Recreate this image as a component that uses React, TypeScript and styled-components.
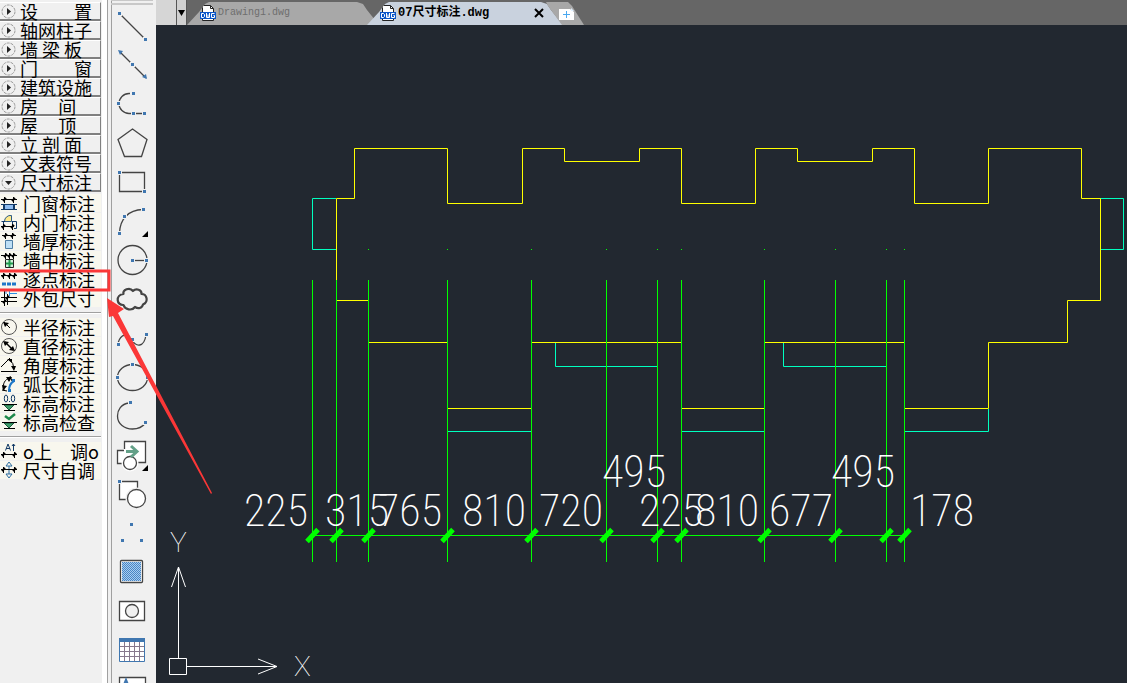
import React from "react";
import styled, { createGlobalStyle } from "styled-components";

const GlobalStyle = createGlobalStyle`
  *, *::before, *::after { box-sizing: border-box; }
  html, body { margin: 0; padding: 0; }
  body {
    background: #f0f0f0;
    font-family: "Noto Sans CJK SC", sans-serif;
    overflow: hidden;
  }
  button { font-family: inherit; border: 0; padding: 0; margin: 0; background: none; color: inherit; }
`;

const Page = styled.div`
  position: relative;
  display: flex;
  height: 100vh;
  overflow: hidden;
  background: #f0f0f0;
`;

/* ---------- screen menu ---------- */

const Menu = styled.nav`
  flex: none;
  width: 108px;
  padding-top: 2px;
  padding-right: 6px;
  border-right: 1px solid #a0a0a0;
  background: linear-gradient(to left, #fff 0, #fff 5px, #f0f0f0 5px);
`;

const GroupButton = styled.button`
  display: flex;
  align-items: center;
  gap: 4px;
  width: 100%;
  height: 19px;
  padding-left: 1px;
  border-top: 1px solid #fff;
  border-right: 1px solid #808080;
  border-bottom: 2px solid #808080;
  background: #f0f0f0;
  color: #000;
  font-size: 18px;
  line-height: 18px;
  white-space: pre;
`;

const CommandList = styled.div`
  padding: 2px 0 4px;
`;

const CommandButton = styled.button`
  display: flex;
  align-items: center;
  gap: 5px;
  width: 100%;
  height: 19px;
  border-bottom: 1px solid #f0f0f0;
  background: #f8f7ee;
  color: #000;
  font-size: 18px;
  line-height: 18px;
  white-space: pre;
`;

const Divider = styled.hr`
  width: 100%;
  height: 2px;
  margin: 0 0 2px;
  border: 0;
  border-top: 1px solid #a0a0a0;
  background: #fff;
`;

const SmallIcon = styled.svg`
  flex: none;
  display: block;
  width: 18px;
  height: 18px;
  fill: none;
  stroke: #000;
`;

const BulletIcon = styled.svg`
  flex: none;
  display: block;
  width: 15px;
  height: 15px;
`;

const Bullet = ({ open }: { open?: boolean }) => (
  <BulletIcon viewBox="0 0 15 15" aria-hidden="true">
    <circle cx="7.5" cy="7.5" r="6.5" fill="none" stroke="#9a9a9a" strokeDasharray="3 1" />
    <path d={open ? "M4 6h7l-3.500 4z" : "M6 4v7l4-3.500z"} fill="#222" />
  </BulletIcon>
);

/* Horizontal dimension line with a tick at each x. */
const DimMark = ({ y, at, from = 1, to = 17 }: { y: number; at: number[]; from?: number; to?: number }) => (
  <>
    <path d={`M${from} ${y + 0.5}H${to}`} />
    {at.map((x) => (
      <React.Fragment key={x}>
        <path d={`M${x + 0.5} ${y - 2}v6`} />
        <path d={`M${x - 1} ${y + 2}l3-3`} strokeWidth="2" />
      </React.Fragment>
    ))}
  </>
);

const groups = [
  "设　　置",
  "轴网柱子",
  "墙 梁 板",
  "门　　窗",
  "建筑设施",
  "房     间",
  "屋     顶",
  "立 剖 面",
  "文表符号",
  "尺寸标注",
];

type Command = { label: string; icon: React.ReactNode };

const commandGroups: Command[][] = [
  [
    {
      label: "门窗标注",
      icon: (
        <>
          <path d="M4 11h10v4H4z" fill="#8fbdf0" stroke="none" />
          <path d="M1 10.500h16M1 15.500h16" stroke="#123a66" />
          <path d="M4 10v6M14 10v6" stroke="#123a66" strokeWidth="2" />
          <DimMark y={5} at={[4, 13]} />
        </>
      ),
    },
    {
      label: "内门标注",
      icon: (
        <>
          <path d="M4.500 8.500a6 6 0 0 1 7-6v6z" fill="#ffe98a" stroke="#2d5d88" />
          <path d="M12 8.500h4.500v7H14M1.500 8.500H5M12.500 8v3M3.500 9v7" stroke="#123a66" />
          <DimMark y={13} at={[3, 12]} to={14} />
        </>
      ),
    },
    {
      label: "墙厚标注",
      icon: (
        <>
          <path d="M5.500 8.500h7v8h-7z" fill="#bfe0f5" stroke="#4f7fa5" />
          <DimMark y={3} at={[5, 12]} from={2} to={16} />
        </>
      ),
    },
    {
      label: "墙中标注",
      icon: (
        <>
          <path d="M5.500 8.500h8v8h-8z" fill="#d3f2dc" stroke="#222" />
          <path d="M9.500 9v7M6 12.500h7" stroke="#1f9a4c" strokeWidth="2" />
          <DimMark y={4} at={[5, 9, 13]} />
        </>
      ),
    },
    {
      label: "逐点标注",
      icon: (
        <>
          <DimMark y={5} at={[3, 9, 14]} />
          <path d="M2 14h4M7 14h4M12 14h4" stroke="#1f78c8" strokeWidth="3" />
        </>
      ),
    },
    {
      label: "外包尺寸",
      icon: (
        <>
          <path d="M6 1.500h10M9 4.500h8M9.500 2v5M6 1v4" stroke="#2b8fe0" />
          <path d="M4.500 2v15M7.500 5v11" />
          <DimMark y={8} at={[7]} />
          <DimMark y={12} at={[4]} />
        </>
      ),
    },
  ],
  [
    {
      label: "半径标注",
      icon: (
        <>
          <circle cx="9" cy="9" r="7.500" stroke="#555" />
          <path d="M4 4l6 6" />
          <path d="M3 4l6 1-4 4z" fill="#000" stroke="none" />
        </>
      ),
    },
    {
      label: "直径标注",
      icon: (
        <>
          <circle cx="9" cy="9" r="7.500" stroke="#555" />
          <path d="M5 5l8 8" strokeWidth="1.500" />
          <path d="M3 4l6 1-4 4zM15 14l-6-1 4-4z" fill="#000" stroke="none" />
        </>
      ),
    },
    {
      label: "角度标注",
      icon: (
        <>
          <path d="M1 15.500h16M1 11L10 2M9 3q5 4 5 10" />
          <path d="M7 3l5 0 0 4zM11 10l5 0-2 5z" fill="#000" stroke="none" />
        </>
      ),
    },
    {
      label: "弧长标注",
      icon: (
        <>
          <path d="M4 15C2 9 5 4 10 3M2 15l5 1M10 1l2 5" />
          <path d="M2 10l5 1-4 5zM6 2l6 0-3 5z" fill="#000" stroke="none" />
          <path d="M9 16c0-4 1-8 5-10" stroke="#1f78c8" strokeWidth="2" />
          <path d="M8 14h3v3h-3zM12 4h3v3h-3z" fill="#1f78c8" stroke="none" />
        </>
      ),
    },
    {
      label: "标高标注",
      icon: (
        <>
          <ellipse cx="6" cy="4.500" rx="1.700" ry="3.500" stroke="#123a66" />
          <ellipse cx="13" cy="4.500" rx="1.700" ry="3.500" stroke="#123a66" />
          <path d="M9.500 7v1" stroke="#123a66" />
          <path d="M4 11h10l-5 5z" fill="#3f9d6b" stroke="#1a5a3c" />
          <path d="M2 10.500h15M4 16.500h11" />
        </>
      ),
    },
    {
      label: "标高检查",
      icon: (
        <>
          <path d="M5 3l4 3 6-5" stroke="#1f8a4c" strokeWidth="2.500" />
          <path d="M4 10h10l-5 5z" fill="#3f9d6b" stroke="#1a5a3c" />
          <path d="M2 9.500h15M4 15.500h11" />
        </>
      ),
    },
  ],
  [
    {
      label: "o上　调o",
      icon: (
        <>
          <path d="M5.500 8.500L8 2l2.500 6.500M6 6.500h4M13.500 9V2M12 4l1.500-2L15 4" stroke="#123a66" />
          <DimMark y={12} at={[3, 14]} />
        </>
      ),
    },
    {
      label: "尺寸自调",
      icon: (
        <>
          <path d="M9 1l3 4H6zM9 17l3-4H6zM9 5v8" stroke="#2d6da0" />
          <DimMark y={8} at={[3, 14]} />
        </>
      ),
    },
  ],
];

/* ---------- draw toolbar ---------- */

const Toolbar = styled.div`
  flex: none;
  display: flex;
  flex-direction: column;
  width: 48px;
  padding-left: 3px;
  overflow: hidden;
  background: linear-gradient(to right, #f0f0f0 3px, #a0a0a0 3px, #a0a0a0 4px, #f0f0f0 4px);
`;

const Grip = styled.div`
  flex: none;
  width: 42px;
  height: 5px;
  margin-bottom: 3px;
  border-top: 1px solid #c8c8c8;
  border-bottom: 2px solid #c8c8c8;
`;

const ToolButton = styled.button`
  flex: none;
  width: 45px;
  height: 39px;
`;

const ToolIcon = styled.svg`
  display: block;
  width: 45px;
  height: 39px;
  fill: none;
  stroke: #444;
  stroke-width: 1.3;
`;

const Grips = ({ at }: { at: [number, number][] }) => (
  <>
    {at.map(([x, y]) => (
      <g key={`${x}-${y}`} stroke="none">
        <rect x={x - 2} y={y - 2} width="5" height="5" fill="#f0f0f0" />
        <rect x={x - 1} y={y - 1} width="3" height="3" fill="#4077b0" />
      </g>
    ))}
  </>
);

const Flyout = () => <path d="M36 28v6h-6z" fill="#000" stroke="none" />;

const tools: { name: string; icon: React.ReactNode }[] = [
  {
    name: "Line",
    icon: (
      <>
        <path d="M8 6l26 26" />
        <Grips at={[[7, 5], [33, 31]]} />
      </>
    ),
  },
  {
    name: "Construction line",
    icon: (
      <>
        <path d="M8 5l26 26" />
        <path d="M6 3l5 1-3 4zM35 32l-5-2 4-3z" fill="#4077b0" stroke="none" />
        <Grips at={[[20, 17]]} />
      </>
    ),
  },
  {
    name: "Polyline",
    icon: (
      <>
        <path d="M18 7.500h-1a10 10 0 0 0 0 20h16" />
        <Grips at={[[21, 7], [6, 17], [21, 27], [32, 27]]} />
      </>
    ),
  },
  { name: "Polygon", icon: <path d="M20.500 4L35 14.500 29.500 31.500h-17L6 14.500z" /> },
  {
    name: "Rectangle",
    icon: (
      <>
        <path d="M7.500 8.500h25v19h-25z" />
        <Grips at={[[7, 8], [32, 27]]} />
      </>
    ),
  },
  {
    name: "Arc",
    icon: (
      <>
        <path d="M7.500 30C8 16 16 7 31 6.500" />
        <Grips at={[[31, 6], [12, 13], [7, 30]]} />
        <Flyout />
      </>
    ),
  },
  {
    name: "Circle",
    icon: (
      <>
        <circle cx="20.500" cy="18" r="14.500" />
        <path d="M20 18.500h14" />
        <Grips at={[[20, 18], [34, 18]]} />
      </>
    ),
  },
  {
    name: "Revision cloud",
    icon: (
      <path
        d="M11.500 13C10.500 9 17.500 5.500 21 10C24 7 30 8.500 29.500 13C35 13 37 21 31 23.500C30 27.500 26 28 23 26C20 30 13 29 11.500 24C4.500 24.500 3 14 11.500 13z"
        strokeWidth="2.200"
        strokeLinejoin="round"
      />
    ),
  },
  {
    name: "Spline",
    icon: (
      <>
        <path d="M6 23c3-10 10-10 14-3s12 8 14-5" />
        <Grips at={[[6, 24], [20, 19], [34, 14]]} />
      </>
    ),
  },
  {
    name: "Ellipse",
    icon: (
      <>
        <ellipse cx="20.500" cy="18.500" rx="15" ry="13" />
        <Grips at={[[20, 5], [5, 18], [35, 18]]} />
      </>
    ),
  },
  {
    name: "Ellipse arc",
    icon: (
      <>
        <path d="M17 5C9 6 5.500 12 5.500 18c0 8 7 13 15 13 6 0 10-2 13-6" />
        <Grips at={[[18, 4], [33, 24]]} />
      </>
    ),
  },
  {
    name: "Insert block",
    icon: (
      <>
        <path d="M5.500 13.500h15v13h-15z" fill="#fff" stroke="none" />
        <path d="M12.500 4.500h21v21h-21z" fill="#fff" />
        <path d="M11 12h3v15h-3z" fill="#fff" stroke="none" />
        <path d="M12 13.500H5.500v13h8" />
        <circle cx="18" cy="26" r="8.500" fill="#fff" stroke="none" />
        <circle cx="18" cy="26" r="6.500" fill="#fff" />
        <path d="M14 14.500h11M19 9l6 5.500-6 5.500" stroke="#63a088" strokeWidth="3" />
        <Flyout />
      </>
    ),
  },
  {
    name: "Make block",
    icon: (
      <>
        <path d="M7.500 5.500h18v18h-18z" fill="#fff" />
        <circle cx="24.500" cy="22.500" r="11" fill="#f0f0f0" stroke="none" />
        <circle cx="24.500" cy="22.500" r="9" fill="#fff" />
        <Grips at={[[7, 5]]} />
      </>
    ),
  },
  { name: "Point", icon: <Grips at={[[19, 9], [10, 25], [29, 25]]} /> },
  {
    name: "Hatch",
    icon: (
      <>
        <defs>
          <pattern id="dither" width="2" height="2" patternUnits="userSpaceOnUse">
            <rect width="2" height="2" fill="#a8cdf0" stroke="none" />
            <path d="M0 0h1v1h-1zM1 1h1v1h-1z" fill="#4a86c4" stroke="none" />
          </pattern>
        </defs>
        <rect x="8.500" y="6.500" width="22" height="22" rx="1" fill="#fff" />
        <rect x="10" y="8" width="19" height="19" fill="url(#dither)" stroke="none" />
      </>
    ),
  },
  {
    name: "Region",
    icon: (
      <>
        <path d="M7.500 8.500h25v19h-25z" fill="#fff" />
        <circle cx="20" cy="18" r="6.500" fill="#f0f0f0" />
      </>
    ),
  },
  {
    name: "Table",
    icon: (
      <>
        <path d="M7.500 6.500h25v23h-25z" fill="#fff" stroke="#4077b0" strokeWidth="1" />
        <path d="M8 14.500h24M8 19.500h24M8 24.500h24M12.500 10v19M17.500 10v19M22.500 10v19M27.500 10v19" stroke="#86788c" strokeWidth="1" />
        <path d="M7 8h26" stroke="#4077b0" strokeWidth="4" />
      </>
    ),
  },
  {
    name: "Multiline text",
    icon: (
      <>
        <path d="M7.500 6.500h26v24h-26z" fill="#fff" />
        <path d="M10 20l4-10 4 10" stroke="#4077b0" strokeWidth="3" />
      </>
    ),
  },
];

/* ---------- drawing area ---------- */

const Workspace = styled.main`
  flex: 1;
  display: flex;
  flex-direction: column;
  min-width: 0;
  background: #222830;
`;

const TabStrip = styled.header`
  flex: none;
  display: flex;
  align-items: flex-end;
  height: 25px;
  background: #666;
`;

const StripCorner = styled.div`
  width: 21px;
  height: 25px;
  border-right: 1px solid #555;
  background: #d6d6d6;
`;

const TabMenuButton = styled.button`
  width: 10px;
  height: 25px;
  border-right: 1px solid #555;
  background: #d0d0d0;
  color: #000;
`;

const Tab = styled.div<{ $active?: boolean }>`
  display: flex;
  align-items: center;
  width: ${(p) => (p.$active ? 196 : 192)}px;
  height: 23px;
  margin-left: ${(p) => (p.$active ? -12 : 0)}px;
  padding: 0 12px 2px 13px;
  background: ${(p) => (p.$active ? "#c9d2de" : "#a8a8a8")};
  clip-path: polygon(0 100%, 12px 10px, 18px 2px, 22px 0, calc(100% - 22px) 0, calc(100% - 16px) 2px, calc(100% - 12px) 8px, 100% 100%);
`;

const TabLabel = styled.button<{ $active?: boolean }>`
  flex: 1;
  display: flex;
  align-items: center;
  gap: 2px;
  color: ${(p) => (p.$active ? "#000" : "#6e6e6e")};
  font-family: "Liberation Mono", "Noto Sans CJK SC", monospace;
  font-size: ${(p) => (p.$active ? 12 : 10)}px;
  font-weight: ${(p) => (p.$active ? 700 : 400)};
  line-height: 16px;
  white-space: pre;
`;

const CloseButton = styled.button`
  width: 12px;
  height: 12px;
  margin-right: 6px;
`;

const NewTabButton = styled.button`
  display: flex;
  justify-content: center;
  align-items: center;
  width: 38px;
  height: 23px;
  margin-left: -17px;
  padding-left: 4px;
  background: #a8a8a8;
  clip-path: polygon(0 0, 22px 0, 26px 4px, 100% 100%, 16px 100%, 2px 4px);
`;

const Glyph = styled.svg`
  display: block;
  flex: none;
`;

const DwgIcon = () => (
  <Glyph width="16" height="16" viewBox="0 0 16 16" aria-hidden="true">
    <path d="M2.500 15.500v-15h8l3 3v12z" fill="#fff" stroke="#222" />
    <path d="M10.500 0.500v3h3" fill="none" stroke="#222" />
    <path d="M0 7h16v7H0z" fill="#0a55c8" />
    <path
      d="M1.500 8.500v4h2l1-1v-2l-1-1zM6.500 8v4.500h3V8M8 9.500v3M14.500 8.500h-3v4h3v-2h-1"
      fill="none"
      stroke="#fff"
    />
  </Glyph>
);

const Canvas = styled.svg`
  flex: 1;
  display: block;
  width: 100%;
  min-height: 0;
  fill: none;
  stroke-width: 1;
`;

const DimText = styled.text`
  fill: #fff;
  font-family: "Roboto Condensed", "Roboto", sans-serif;
  font-size: 44px;
  font-weight: 200;
`;

const AxisText = styled.text`
  fill: #fff;
  font-family: "Roboto", sans-serif;
  font-size: 28px;
  font-weight: 100;
`;

const dimLines = [312, 336, 368, 447, 531, 606, 657, 681, 764, 835, 886, 904];

const dimensions: [string, number, number][] = [
  ["225", 244, 526],
  ["315", 325, 526],
  ["765", 378, 526],
  ["810", 462, 526],
  ["720", 539, 526],
  ["495", 602, 487],
  ["225", 639, 526],
  ["810", 695, 526],
  ["677", 769, 526],
  ["495", 831, 487],
  ["178", 910, 526],
];

const Annotation = styled.svg`
  position: absolute;
  inset: 0;
  width: 1127px;
  height: 683px;
  pointer-events: none;
`;

export default function App() {
  return (
    <Page>
      <GlobalStyle />
      <Menu>
        {groups.map((label, i) => (
          <GroupButton key={label}>
            <Bullet open={i === groups.length - 1} />
            {label}
          </GroupButton>
        ))}
        {commandGroups.map((commands, i) => (
          <React.Fragment key={i}>
            {i > 0 && <Divider />}
            <CommandList>
              {commands.map((c) => (
                <CommandButton key={c.label}>
                  <SmallIcon viewBox="0 0 18 18" aria-hidden="true">
                    {c.icon}
                  </SmallIcon>
                  {c.label}
                </CommandButton>
              ))}
            </CommandList>
          </React.Fragment>
        ))}
      </Menu>

      <Toolbar>
        <Grip />
        {tools.map((t) => (
          <ToolButton key={t.name} aria-label={t.name}>
            <ToolIcon viewBox="-1 0 45 39">{t.icon}</ToolIcon>
          </ToolButton>
        ))}
      </Toolbar>

      <Workspace>
        <TabStrip>
          <StripCorner />
          <TabMenuButton aria-label="Drawing list">
            <Glyph width="9" height="8" viewBox="0 0 9 8">
              <path d="M1 1h7l-3.500 6z" fill="#000" />
            </Glyph>
          </TabMenuButton>
          <Tab>
            <TabLabel>
              <DwgIcon />
              Drawing1.dwg
            </TabLabel>
          </Tab>
          <Tab $active>
            <TabLabel $active>
              <DwgIcon />
              07尺寸标注.dwg
            </TabLabel>
            <CloseButton aria-label="Close">
              <Glyph width="12" height="12" viewBox="0 0 12 12">
                <path d="M2 2l8 8M10 2l-8 8" stroke="#000" strokeWidth="2" />
              </Glyph>
            </CloseButton>
          </Tab>
          <NewTabButton aria-label="New drawing">
            <Glyph width="16" height="14" viewBox="0 0 16 14">
              <path d="M0 2h11l4 3v8H0z" fill="#fff" />
              <path d="M12 1l3 3h-3z" fill="#dff0ff" />
              <path d="M7.500 4v7M4 7.500h7" stroke="#4aa8f0" />
            </Glyph>
          </NewTabButton>
        </TabStrip>

        <Canvas viewBox="156 25 971 658" preserveAspectRatio="xMinYMin meet">
          <g stroke="#00ffbf">
            <path d="M336 198.500H312.500V249.500H336M1100 198.500H1123.500V249.500H1100" />
            <path d="M555.500 343V366.500H657M783.500 343V366.500H886" />
            <path d="M447 431.500H531M681 431.500H764M904 431.500H988.500V409" />
          </g>
          <g stroke="#ffff00">
            <path d="M336.500 301V198.500H354.500V148.500H447.500V203.500H522.500V148.500H564.500V161.500H639.500V148.500H681.500V203.500H755.500V148.500H797.500V161.500H872.500V148.500H914.500V203.500H988.500V148.500H1081.500V198.500H1100.500V300.500H1067.500V342.500H988.500V408.500H904" />
            <path d="M336 300.500H368M368 342.500H447M531 342.500H681M764 342.500H904M447 408.500H531M681 408.500H764" />
          </g>
          <g stroke="#00ff00">
            <path d="M312 535.500H904" />
            {dimLines.map((x) => (
              <g key={x}>
                <path d={`M${x + 0.5} 280V562`} />
                {x > 336 && <path d={`M${x} 249.500h1`} />}
                <path d={`M${x - 5} 541.500l11-12`} strokeWidth="5" />
              </g>
            ))}
          </g>
          {dimensions.map(([value, x, y]) => (
            <DimText key={x} x={x} y={y}>
              {value}
            </DimText>
          ))}
          <g stroke="#fff">
            <path d="M169.500 658.500h17v16h-17zM178.500 658V567M171.500 587l7-20 7 20" />
            <path d="M187 666.500h90M258 659l19 7.500-19 7.500" />
          </g>
          <AxisText x="170" y="552">
            Y
          </AxisText>
          <AxisText x="294" y="676">
            X
          </AxisText>
        </Canvas>
      </Workspace>

      <Annotation viewBox="0 0 1127 683" aria-hidden="true">
        <rect x="-2" y="271" width="111" height="19" fill="none" stroke="#fb3737" strokeWidth="3" />
        <path d="M107 298l17 11-6 4 94 180-1 1-98-178-4 1z" fill="#fb3737" />
      </Annotation>
    </Page>
  );
}
